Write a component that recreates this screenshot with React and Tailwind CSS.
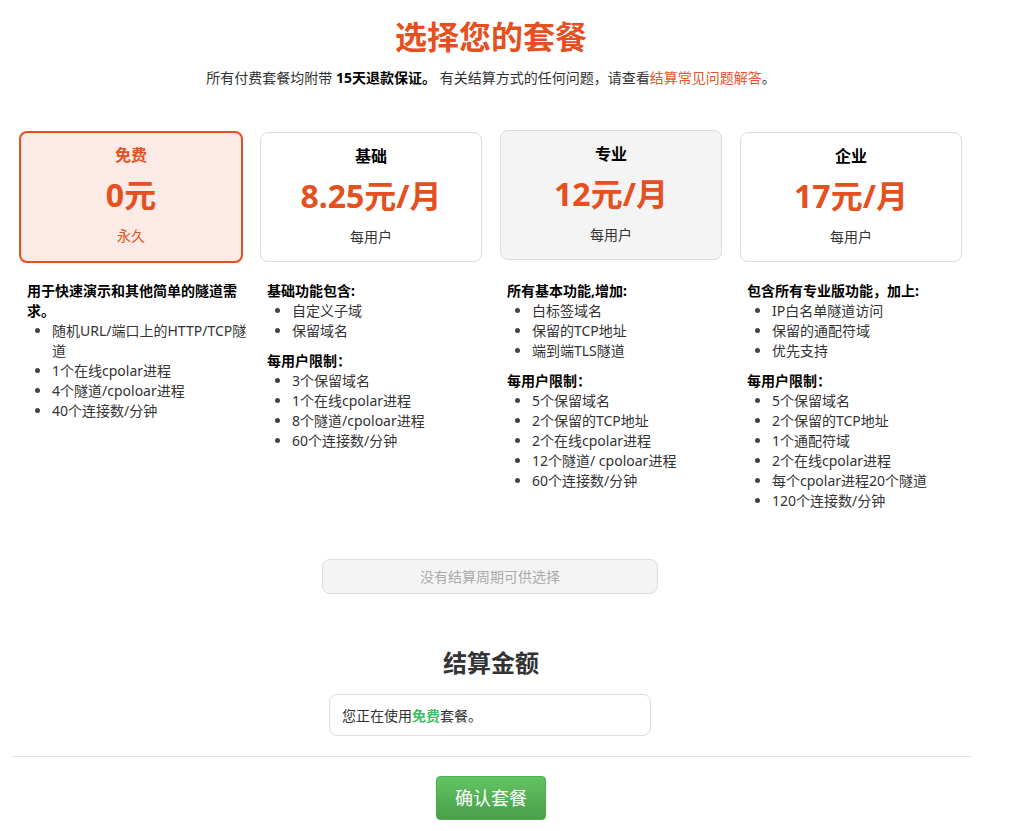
import React from 'react';

const FONT = { fontFamily: '"Noto Sans", "Noto Sans CJK SC", sans-serif' };

const PLANS = [
  {
    name: '免费',
    price: '0元',
    sub: '永久',
    active: true,
    sections: [
      {
        title: '用于快速演示和其他简单的隧道需求。',
        items: ['随机URL/端口上的HTTP/TCP隧道', '1个在线cpolar进程', '4个隧道/cpoloar进程', '40个连接数/分钟'],
      },
    ],
  },
  {
    name: '基础',
    price: '8.25元/月',
    sub: '每用户',
    sections: [
      { title: '基础功能包含:', items: ['自定义子域', '保留域名'] },
      { title: '每用户限制：', items: ['3个保留域名', '1个在线cpolar进程', '8个隧道/cpoloar进程', '60个连接数/分钟'] },
    ],
  },
  {
    name: '专业',
    price: '12元/月',
    sub: '每用户',
    hover: true,
    sections: [
      { title: '所有基本功能,增加:', items: ['白标签域名', '保留的TCP地址', '端到端TLS隧道'] },
      {
        title: '每用户限制：',
        items: ['5个保留域名', '2个保留的TCP地址', '2个在线cpolar进程', '12个隧道/ cpoloar进程', '60个连接数/分钟'],
      },
    ],
  },
  {
    name: '企业',
    price: '17元/月',
    sub: '每用户',
    sections: [
      { title: '包含所有专业版功能，加上:', items: ['IP白名单隧道访问', '保留的通配符域', '优先支持'] },
      {
        title: '每用户限制：',
        items: ['5个保留域名', '2个保留的TCP地址', '1个通配符域', '2个在线cpolar进程', '每个cpolar进程20个隧道', '120个连接数/分钟'],
      },
    ],
  },
];

const PlanCard = ({ plan }) => {
  if (plan.active) {
    return (
      <div className="-m-[1px] h-[132px] rounded-lg border-2 border-[#e4501e] bg-[#fbeae5] pt-[10px] flex flex-col items-center">
        <div className="text-[16px] leading-[24px] font-bold text-[#e4501e]">{plan.name}</div>
        <div className="mt-[8px] text-[32px] leading-[40px] font-bold text-[#e4501e]">{plan.price}</div>
        <div className="mt-[11px] text-[14px] leading-[20px] text-[#e4501e]">{plan.sub}</div>
      </div>
    );
  }
  return (
    <div
      className={
        'h-[130px] rounded-lg border border-[#dddddd] pt-[11px] flex flex-col items-center ' +
        (plan.hover ? 'bg-[#f4f4f4] -mt-[2px]' : 'bg-white')
      }
    >
      <div className="text-[16px] leading-[24px] font-bold text-black">{plan.name}</div>
      <div className="mt-[8px] text-[32px] leading-[40px] font-bold text-[#e4501e]">{plan.price}</div>
      <div className="mt-[11px] text-[14px] leading-[20px] text-[#333333]">{plan.sub}</div>
    </div>
  );
};

const Features = ({ sections }) => (
  <div className="pl-4 pr-1 text-[14px] leading-[20px]">
    {sections.map((s, i) => (
      <div key={i} className={i > 0 ? 'mt-[10px]' : ''}>
        <div className="font-bold text-black">{s.title}</div>
        <ul className="list-disc pl-[25px] text-[#333333] marker:text-[#444444]">
          {s.items.map((it) => (
            <li key={it}>{it}</li>
          ))}
        </ul>
      </div>
    ))}
  </div>
);

export default function App() {
  return (
    <div className="min-h-[831px] bg-white" style={FONT}>
      <div className="ml-[11px] w-[960px] pt-[17px] pb-[11px]">
        <h1 className="text-center text-[32px] leading-[40px] font-bold text-[#e4501e]">选择您的套餐</h1>
        <p className="mt-[11px] text-center text-[14px] leading-[20px] text-[#333333]">
          所有付费套餐均附带 <b className="text-black">15天退款保证。</b> 有关结算方式的任何问题，请查看
          <span className="text-[#e8552a]">结算常见问题解答</span>。
        </p>

        <div className="mt-[44px] grid grid-cols-4">
          {PLANS.map((p) => (
            <div key={p.name} className="px-[9px] h-[130px]">
              <PlanCard plan={p} />
            </div>
          ))}
        </div>

        <div className="mt-[19px] grid grid-cols-4">
          {PLANS.map((p) => (
            <Features key={p.name} sections={p.sections} />
          ))}
        </div>

        <div className="mt-[48px] flex justify-center">
          <div className="ml-[-2px] w-[336px] h-[35px] rounded-lg border border-[#dddddd] bg-[#f4f4f4] flex items-center justify-center text-[14px] text-[#aaaaaa]">
            没有结算周期可供选择
          </div>
        </div>

        <h2 className="mt-[51px] text-center text-[24px] leading-[36px] font-bold text-[#333333]">结算金额</h2>

        <div className="mt-[13px] flex justify-center">
          <div className="ml-[-2px] w-[322px] h-[42px] rounded-lg border border-[#dddddd] px-3 flex items-center text-[14px] text-[#333333]">
            您正在使用<b className="text-[#3cbf62]">免费</b>套餐。
          </div>
        </div>

        <div className="mt-[20px] border-t border-[#e5e5e5]" />

        <div className="mt-[19px] flex justify-center">
          <button className="w-[110px] h-[44px] rounded border border-[#4cae4c] bg-gradient-to-b from-[#62c462] to-[#4a9f4a] text-[18px] text-white">
            确认套餐
          </button>
        </div>
      </div>
    </div>
  );
}
